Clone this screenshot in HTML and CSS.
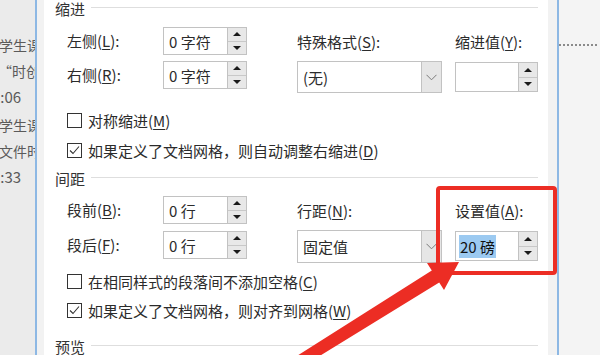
FILE: index.html
```html
<!DOCTYPE html>
<html lang="zh-CN">
<head>
<meta charset="utf-8">
<title>段落</title>
<link rel="stylesheet" href="styles.css">
</head>
<body>
<div class="page">
  <div class="bg-left">
    <div class="bg-group">
      <div class="bg-line t1">学生课</div>
      <div class="bg-line t2">“时创</div>
      <div class="bg-line t3">2:06</div>
    </div>
    <div class="bg-group">
      <div class="bg-line t1">学生课</div>
      <div class="bg-line t5">文件时</div>
      <div class="bg-line t3">2:33</div>
    </div>
  </div>
  <div class="edge"></div>
  <div class="frame left"></div>
  <div class="dialog">
    <div class="group-title"><span class="gt">缩进</span><i class="rule"></i></div>

    <div class="row row-a">
      <div class="c1">
        <span class="lbl">左侧(<u>L</u>):</span>
        <div class="spin">
          <div class="spin-text">0 字符</div>
          <div class="spin-btns"><div class="sb"><i class="up"></i></div><div class="sb"><i class="down"></i></div></div>
        </div>
      </div>
      <div class="c2"><span class="lbl">特殊格式(<u>S</u>):</span></div>
      <div class="c3"><span class="lbl">缩进值(<u>Y</u>):</span></div>
    </div>

    <div class="row row-b">
      <div class="c1">
        <span class="lbl">右侧(<u>R</u>):</span>
        <div class="spin">
          <div class="spin-text">0 字符</div>
          <div class="spin-btns"><div class="sb"><i class="up"></i></div><div class="sb"><i class="down"></i></div></div>
        </div>
      </div>
      <div class="c2">
        <div class="combo">
          <div class="combo-text">(无)</div>
          <div class="combo-btn"><svg width="11" height="7" viewBox="0 0 11 7"><polyline points="0.5,0.8 5.5,5.8 10.5,0.8" fill="none" stroke="#7a7a7a" stroke-width="1"/></svg></div>
        </div>
      </div>
      <div class="c3 shift">
        <div class="spin wide">
          <div class="spin-text"></div>
          <div class="spin-btns"><div class="sb"><i class="up"></i></div><div class="sb"><i class="down"></i></div></div>
        </div>
      </div>
    </div>

    <div class="chk chk-1"><span class="box"></span><span>对称缩进(<u>M</u>)</span></div>
    <div class="chk chk-2"><span class="box"><svg width="13" height="13" viewBox="0 0 13 13"><polyline points="2,6.5 5,9.5 11,2.5" fill="none" stroke="#333" stroke-width="1.1"/></svg></span><span>如果定义了文档网格，则自动调整右缩进(<u>D</u>)</span></div>

    <div class="group-title gt-2"><span class="gt">间距</span><i class="rule"></i></div>

    <div class="row row-c">
      <div class="c1">
        <span class="lbl">段前(<u>B</u>):</span>
        <div class="spin">
          <div class="spin-text">0 行</div>
          <div class="spin-btns"><div class="sb"><i class="up"></i></div><div class="sb"><i class="down"></i></div></div>
        </div>
      </div>
      <div class="c2"><span class="lbl">行距(<u>N</u>):</span></div>
      <div class="c3"><span class="lbl">设置值(<u>A</u>):</span></div>
    </div>

    <div class="row row-d">
      <div class="c1 shift">
        <span class="lbl">段后(<u>F</u>):</span>
        <div class="spin">
          <div class="spin-text">0 行</div>
          <div class="spin-btns"><div class="sb"><i class="up"></i></div><div class="sb"><i class="down"></i></div></div>
        </div>
      </div>
      <div class="c2">
        <div class="combo tall">
          <div class="combo-text">固定值</div>
          <div class="combo-btn"><svg width="11" height="7" viewBox="0 0 11 7"><polyline points="0.5,0.8 5.5,5.8 10.5,0.8" fill="none" stroke="#7a7a7a" stroke-width="1"/></svg></div>
        </div>
      </div>
      <div class="c3 shift">
        <div class="spin wide">
          <div class="spin-text"><span class="sel">20 磅</span></div>
          <div class="spin-btns"><div class="sb"><i class="up"></i></div><div class="sb"><i class="down"></i></div></div>
        </div>
      </div>
    </div>

    <div class="chk chk-3"><span class="box"></span><span>在相同样式的段落间不添加空格(<u>C</u>)</span></div>
    <div class="chk chk-4"><span class="box"><svg width="13" height="13" viewBox="0 0 13 13"><polyline points="2,6.5 5,9.5 11,2.5" fill="none" stroke="#333" stroke-width="1.1"/></svg></span><span>如果定义了文档网格，则对齐到网格(<u>W</u>)</span></div>

    <div class="group-title gt-3"><span class="gt">预览</span><i class="rule"></i></div>
  </div>
  <div class="frame right"></div>
  <div class="edge"></div>
  <div class="bg-right"><div class="dots"></div></div>

  <div class="mark-box"></div>
  <svg class="arrow" width="600" height="355" viewBox="0 0 600 355">
    <polygon points="459,262 444,290 439.2,282.5 304.8,365.1 298.4,354.9 431.8,270.5 427,263" fill="#ec2d24"/>
  </svg>
</div>
</body>
</html>
```

FILE: styles.css
```css
* { box-sizing: border-box; }
html, body { margin: 0; padding: 0; }
body {
  width: 600px;
  height: 355px;
  overflow: hidden;
  background: #f0f0f0;
  font-family: "Noto Sans CJK SC", "Noto Sans", sans-serif;
  font-size: 15px;
  color: #2b2b2b;
}
u { text-decoration: underline; text-underline-offset: 2px; text-decoration-thickness: 1px; }

.page {
  position: relative;
  display: flex;
  width: 600px;
  height: 355px;
  overflow: hidden;
}

.bg-left {
  width: 35px;
  flex: none;
  background: #ebebeb;
  overflow: hidden;
  padding-top: 32px;
  color: #5a5a5a;
  font-size: 14px;
}
.bg-group { margin-bottom: 2px; }
.bg-line {
  height: 26px;
  line-height: 26px;
  white-space: nowrap;
}
.bg-line.t1 { text-indent: -1px; }
.bg-line.t2 { text-indent: -2px; }
.bg-line.t3 { text-indent: -8px; font-size: 15px; }
.bg-line.t5 { text-indent: -1px; }

.edge {
  width: 2px;
  flex: none;
  background: #8db8e4;
}
.frame { flex: none; background: #f2f2f2; }
.frame.left { width: 7px; }
.frame.right { width: 9px; }

.dialog {
  width: 504px;
  flex: none;
  background: #fff;
  padding-left: 11px;
}

.group-title {
  display: flex;
  align-items: center;
  height: 17px;
  margin-right: 10px;
}
.gt { line-height: 17px; color: #333; }
.rule {
  flex: 1;
  height: 1px;
  background: #dedede;
  margin-left: 6px;
  margin-top: -2px;
}
.gt-2 { margin-top: 10px; }
.gt-3 { margin-top: 18px; }

.row {
  display: flex;
  padding-left: 12px;
}
.row-a { margin-top: 10px; height: 28px; align-items: center; }
.row-b { margin-top: 6px; height: 32px; align-items: flex-start; }
.row-c { margin-top: 9px; height: 28px; align-items: center; }
.row-d { margin-top: 6px; height: 33px; align-items: flex-start; }

.c1 { width: 230px; flex: none; display: flex; align-items: center; }
.c2 { width: 158px; flex: none; }
.c3 { flex: 1; }
.shift { margin-top: 1px; }

.lbl { line-height: 20px; white-space: nowrap; }
.c1 .lbl { width: 96px; flex: none; }

.spin {
  display: flex;
  width: 84px;
  height: 28px;
  border: 1px solid #c2c2c2;
  background: #fff;
}
.spin.wide { width: 83px; height: 30px; }
.spin-text {
  flex: 1;
  padding-left: 5px;
  display: flex;
  align-items: center;
  white-space: nowrap;
}
.spin-btns {
  width: 19px;
  flex: none;
  display: flex;
  flex-direction: column;
  border-left: 1px solid #c2c2c2;
  background: #e8e8e8;
}
.sb {
  flex: 1;
  display: flex;
  align-items: center;
  justify-content: center;
}
.sb + .sb { border-top: 1px solid #c8c8c8; }
.up {
  width: 0; height: 0;
  border-left: 4px solid transparent;
  border-right: 4px solid transparent;
  border-bottom: 4px solid #1a1a1a;
}
.down {
  width: 0; height: 0;
  border-left: 4px solid transparent;
  border-right: 4px solid transparent;
  border-top: 4px solid #1a1a1a;
}

.sel {
  display: inline-block;
  background: #9ccaf1;
  line-height: 23px;
  padding: 0 1px;
  margin-left: -2px;
  color: #111;
}

.combo {
  display: flex;
  width: 145px;
  height: 32px;
  border: 1px solid #c2c2c2;
  background: #fff;
}
.combo.tall { height: 33px; }
.combo-text {
  flex: 1;
  padding-left: 5px;
  display: flex;
  align-items: center;
  white-space: nowrap;
}
.combo-btn {
  width: 20px;
  flex: none;
  border-left: 1px solid #c2c2c2;
  background: #e6e6e6;
  display: flex;
  align-items: center;
  justify-content: center;
}

.chk {
  display: flex;
  align-items: center;
  height: 20px;
  padding-left: 12px;
  white-space: nowrap;
}
.chk-1 { margin-top: 17px; }
.chk-2 { margin-top: 10px; }
.chk-3 { margin-top: 8px; }
.chk-4 { margin-top: 9px; }
.box {
  width: 15px;
  height: 15px;
  flex: none;
  border: 1px solid #333;
  background: #fff;
  margin-right: 6px;
  display: flex;
  align-items: center;
  justify-content: center;
}

.bg-right {
  flex: 1;
  background: #f4f4f4;
  padding-top: 44px;
}
.dots {
  width: 40px;
  height: 2px;
  background: repeating-linear-gradient(90deg, #8a8a8a 0 2px, transparent 2px 4px);
}

.mark-box {
  position: absolute;
  left: 436px;
  top: 186px;
  width: 121px;
  height: 89px;
  border: 4px solid #ec2d24;
  border-radius: 4px;
}
.arrow {
  position: absolute;
  left: 0;
  top: 0;
}
```
